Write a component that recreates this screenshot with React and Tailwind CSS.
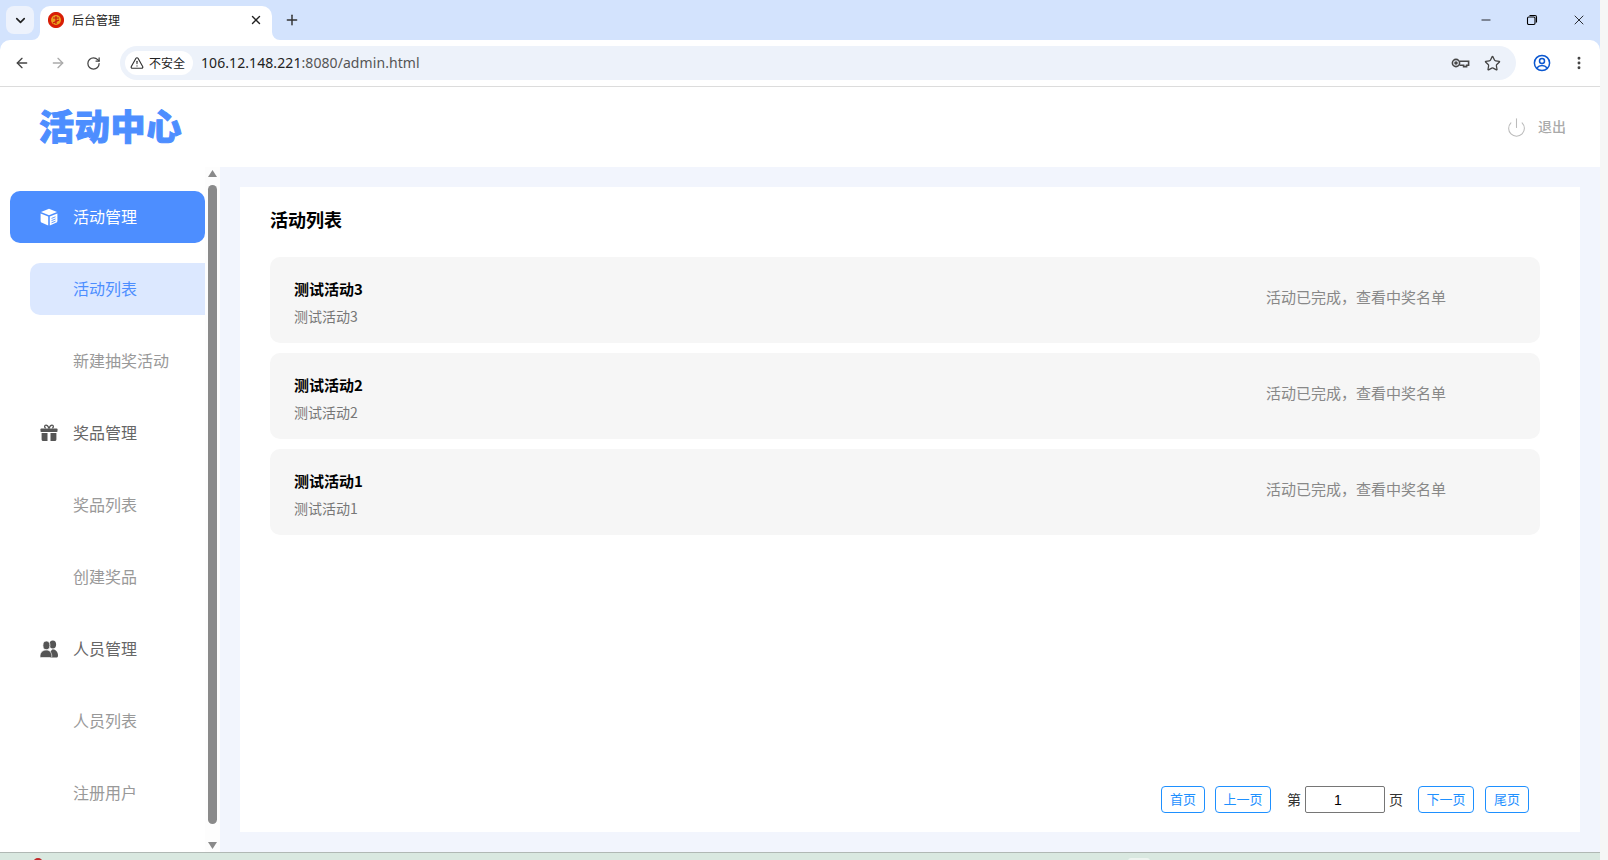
import React from "react";
import { Power, Star, RotateCw, ArrowLeft, ArrowRight, X, Plus, ChevronDown, Minus, TriangleAlert, EllipsisVertical } from "lucide-react";

function Favicon() {
  const spikes = [];
  for (let i = 0; i < 12; i++) spikes.push(<rect key={i} x="6.8" y="0" width="2.4" height="16" fill="#d81e06" transform={`rotate(${i * 15} 8 8)`} />);
  return (
    <svg width="16" height="16" viewBox="0 0 16 16">
      {spikes}
      <circle cx="8" cy="8" r="5" fill="#e8a020" />
      <path d="M5 6h6M8 4v8M5 11l6-3" stroke="#c8140a" strokeWidth="1.2" fill="none" />
    </svg>
  );
}

function KeyIcon() {
  return (
    <svg width="20" height="20" viewBox="0 0 20 20" fill="none" stroke="#474747" strokeWidth="1.6">
      <circle cx="6" cy="10" r="3.6" />
      <circle cx="6" cy="10" r="1" fill="#474747" />
      <path d="M9.6 8.2h9v4h-2v1.400h-3v-1.400h-4" fill="none" />
    </svg>
  );
}

function Profile() {
  return (
    <svg width="18" height="18" viewBox="0 0 18 18" fill="none" stroke="#0b57d0" strokeWidth="1.5">
      <circle cx="9" cy="9" r="7.6" />
      <circle cx="9" cy="7" r="2.5" />
      <path d="M3.800 14c1.600-2 3.200-2.600 5.200-2.600s3.600.6 5.200 2.600" />
    </svg>
  );
}

function Restore() {
  return (
    <svg width="12" height="12" viewBox="0 0 12 12" fill="none" stroke="#000" strokeWidth="1.1">
      <rect x="1.500" y="3" width="7.500" height="7.500" rx="1.200" />
      <path d="M3.500 1.500h5.500a1.500 1.500 0 0 1 1.500 1.500v5.500" />
    </svg>
  );
}

function Cube() {
  return (
    <svg width="18" height="18" viewBox="0 0 18 18" fill="#fff">
      <path d="M9 .8 17 4 9 7.200 1 4z" />
      <path d="M.6 5.400 8.200 8.500v8.900L2 14.800a2 2 0 0 1-1.400-1.900z" />
      <path d="M17.400 5.400 9.800 8.500v8.900l6.200-2.600a2 2 0 0 0 1.400-1.900z" />
      <path d="M11.500 10.400l4-1.600M11.500 12.600l4-1.600M11.500 14.800l4-1.600" stroke="#4d8eff" strokeWidth="0.9" />
    </svg>
  );
}

function Gift() {
  return (
    <svg width="18" height="18" viewBox="0 0 18 18" fill="#555">
      <path d="M5.800 4.200C4.200 3.600 4.200 1.200 6 1.200c1.400 0 2.400 1.600 3 3 .6-1.400 1.600-3 3-3 1.800 0 1.800 2.400.2 3" fill="none" stroke="#555" strokeWidth="1.300" />
      <rect x=".5" y="4.400" width="17" height="3.600" rx="0.8" />
      <path d="M1.600 9h5.900v8H3.200a1.600 1.600 0 0 1-1.600-1.600zM10.500 9h5.900v6.400a1.600 1.600 0 0 1-1.600 1.600h-4.300z" />
    </svg>
  );
}

function Users() {
  return (
    <svg width="18" height="18" viewBox="0 0 18 18" fill="#555">
      <ellipse cx="12.800" cy="4.400" rx="3.300" ry="4" />
      <path d="M10 17.500c-.4-3.500.4-7 2.800-8.200 3 .3 5.200 2.700 5.200 6.400 0 1.200-.6 1.800-1.600 1.800z" />
      <ellipse cx="6.400" cy="5.400" rx="3.500" ry="4.400" stroke="#fff" strokeWidth="0.8" />
      <path d="M0 16.300c0-3.600 2.500-6.200 6.200-6.200s5.600 2.600 5.600 6.200c0 .8-.4 1.200-1.100 1.200H1.100c-.7 0-1.100-.4-1.100-1.200z" stroke="#fff" strokeWidth="0.6" />
    </svg>
  );
}

function Group({ active, icon, label }) {
  return (
    <div className={`h-[52px] mb-[20px] ml-[10px] flex items-center rounded-[10px] text-[16px] ${active ? "bg-[#4d8eff] text-white" : "text-[#666666]"}`}>
      <span className="w-[18px] ml-[30px] mr-[15px] flex items-center">{icon}</span>
      <span className="mt-[-2px]">{label}</span>
    </div>
  );
}

function Sub({ active, label }) {
  return (
    <div className={`h-[52px] mb-[20px] ml-[30px] pl-[43px] pb-[2px] flex items-center rounded-l-[10px] text-[16px] ${active ? "bg-[#dce8ff] text-[#4d8eff]" : "text-[#999999]"}`}>
      {label}
    </div>
  );
}

function Card({ name }) {
  return (
    <div className="h-[86px] mb-[10px] rounded-[10px] bg-[#f6f6f6] pl-[24px] pr-[94px] flex items-center justify-between">
      <div className="flex flex-col">
        <span className="text-[15px] leading-[20px] font-bold text-black mt-[4px]">{name}</span>
        <span className="text-[14px] leading-[20px] text-[#777777] mt-[7px]">{name}</span>
      </div>
      <span className="text-[15px] leading-[20px] text-[#888888] mt-[-6px]">活动已完成，查看中奖名单</span>
    </div>
  );
}

function PageBtn({ w, label }) {
  return (
    <button className={`${w} h-[27px] rounded-[4px] border border-[#1e90ff] bg-white text-[#1e90ff] text-[13px] flex items-center justify-center`}>
      <span className="mt-[-2px]">{label}</span>
    </button>
  );
}

export default function App() {
  return (
    <div className="w-[1608px] h-[860px] overflow-hidden flex bg-[#f6f6f6] font-['Noto_Sans_CJK_SC','Noto_Sans','sans-serif']">
      <div className="w-[1600px] flex flex-col bg-[#d3e3fd]">
        {/* tab strip */}
        <div className="h-[40px] bg-[#d3e3fd] flex items-end shrink-0">
          <div className="w-[28px] h-[28px] ml-[6px] mb-[6px] rounded-[8px] bg-[#edf2fc] flex items-center justify-center">
            <ChevronDown size={15} strokeWidth={2.6} color="#222" />
          </div>
          <div className="relative w-[232px] h-[34px] ml-[6px] bg-white rounded-t-[10px] flex items-center pl-[8px] pr-[9px] pb-[6px]">
            <svg width="8" height="8" viewBox="0 0 8 8" className="absolute left-[-8px] bottom-0"><path d="M8 0v8H0a8 8 0 0 0 8-8z" fill="#fff" /></svg>
            <svg width="8" height="8" viewBox="0 0 8 8" className="absolute right-[-8px] bottom-0"><path d="M0 0v8h8a8 8 0 0 1-8-8z" fill="#fff" /></svg>
            <Favicon />
            <span className="ml-[8px] text-[12px] text-[#222] flex-1">后台管理</span>
            <X size={14} strokeWidth={2.4} color="#222" />
          </div>
          <div className="w-[40px] h-[34px] flex items-center justify-center pb-[6px]">
            <Plus size={16} strokeWidth={2.2} color="#333" />
          </div>
          <div className="flex-1" />
          <div className="h-[40px] flex items-center pr-[13px] gap-[33px]">
            <Minus size={14} strokeWidth={1.4} color="#000" />
            <Restore />
            <X size={16} strokeWidth={1.2} color="#000" />
          </div>
        </div>
        {/* toolbar */}
        <div className="h-[47px] border-b border-[#dcdcdc] bg-white flex items-center shrink-0 rounded-t-[10px]">
          <div className="w-[120px] flex items-center pl-[14px] gap-[20px]">
            <ArrowLeft size={16} strokeWidth={2} color="#444" />
            <ArrowRight size={16} strokeWidth={2} color="#aaa" />
            <RotateCw size={15} strokeWidth={2} color="#444" />
          </div>
          <div className="w-[1396px] h-[34px] rounded-full bg-[#edf2fa] flex items-center pl-[5px]">
            <div className="w-[68px] h-[24px] rounded-full bg-white flex items-center pl-[5px]">
              <TriangleAlert size={14} strokeWidth={2} color="#333" />
              <span className="ml-[5px] text-[12px] leading-[16px] text-[#222]">不安全</span>
            </div>
            <span className="ml-[8px] mt-[-1px] text-[14px] font-['Noto_Sans','sans-serif'] tracking-[0.08px] text-[#222]">106.12.148.221<span className="text-[#555]">:8080/admin.html</span></span>
            <div className="flex-1" />
            <span className="mr-[1px] flex"><KeyIcon /></span>
            <span className="ml-[13px] mr-[15px] flex"><Star size={17} strokeWidth={1.8} color="#444" /></span>
          </div>
          <div className="flex items-center ml-[17px] gap-[20px]">
            <Profile />
            <EllipsisVertical size={16} strokeWidth={2.4} color="#444" />
          </div>
        </div>
        {/* page header */}
        <div className="h-[80px] flex items-center shrink-0 bg-white pl-[39px] pr-[34px]">
          <span className="text-[35px] leading-[40px] font-black text-[#4d8eff] tracking-[0.8px] mt-[-4px] [-webkit-text-stroke:1px_#4d8eff]">活动中心</span>
          <div className="flex-1" />
          <Power size={21} strokeWidth={1.2} color="#bbbbbb" />
          <span className="ml-[11px] mt-[-2px] text-[14px] font-medium text-[#aaaaaa]">退出</span>
        </div>
        {/* body */}
        <div className="flex-1 flex min-h-0">
          <div className="w-[205px] pt-[24px] bg-white overflow-hidden">
            <Group active icon={<Cube />} label="活动管理" />
            <Sub active label="活动列表" />
            <Sub label="新建抽奖活动" />
            <Group icon={<Gift />} label="奖品管理" />
            <Sub label="奖品列表" />
            <Sub label="创建奖品" />
            <Group icon={<Users />} label="人员管理" />
            <Sub label="人员列表" />
            <Sub label="注册用户" />
          </div>
          <div className="w-[15px] bg-[#fdfdfd] flex flex-col items-center pt-[2px] pb-[2px]">
            <svg width="9" height="7" viewBox="0 0 9 7" className="mt-[1px]"><path d="M4.500 0 9 7H0z" fill="#8a8a8a" /></svg>
            <div className="w-[9px] h-[639px] rounded-full bg-[#8a8a8a] mt-[8px]" />
            <div className="flex-1" />
            <svg width="9" height="7" viewBox="0 0 9 7" className="mb-[1px]"><path d="M0 0h9L4.500 7z" fill="#8a8a8a" /></svg>
          </div>
          <div className="flex-1 bg-[#f2f5fd] p-[20px] flex">
            <div className="flex-1 bg-white flex flex-col pl-[30px] pr-[40px]">
              <div className="h-[70px] flex items-center text-[18px] leading-[24px] font-bold text-black mt-[-3px] mb-[3px]">活动列表</div>
              <Card name="测试活动3" />
              <Card name="测试活动2" />
              <Card name="测试活动1" />
              <div className="flex-1" />
              <div className="flex items-center justify-end pr-[11px] pb-[19px] text-[14px] text-[#333]">
                <PageBtn w="w-[44px]" label="首页" />
                <span className="w-[10px]" />
                <PageBtn w="w-[56px]" label="上一页" />
                <span className="ml-[16px] mr-[4px]">第</span>
                <input readOnly value="1" className="w-[80px] h-[27px] border border-[#767676] rounded-[2px] text-center pr-[14px] text-[14px] text-black font-['Liberation_Sans','sans-serif'] outline-none" />
                <span className="ml-[4px] mr-[15px]">页</span>
                <PageBtn w="w-[56px]" label="下一页" />
                <span className="w-[11px]" />
                <PageBtn w="w-[44px]" label="尾页" />
              </div>
            </div>
          </div>
        </div>
        {/* desktop strip */}
        <div className="h-[8px] shrink-0 bg-[#d9e8e0] border-t border-[#b0b8b4] overflow-hidden flex pl-[33px]">
          <div className="w-[10px] h-[10px] rounded-full bg-[#c0282a] mt-[5px]" />
          <div className="w-[22px] h-[6px] rounded-t-[3px] bg-[#eef4f0] mt-[5px] ml-[1085px]" />
        </div>
      </div>
      <div className="flex-1 bg-[#f6f6f6]" />
    </div>
  );
}
